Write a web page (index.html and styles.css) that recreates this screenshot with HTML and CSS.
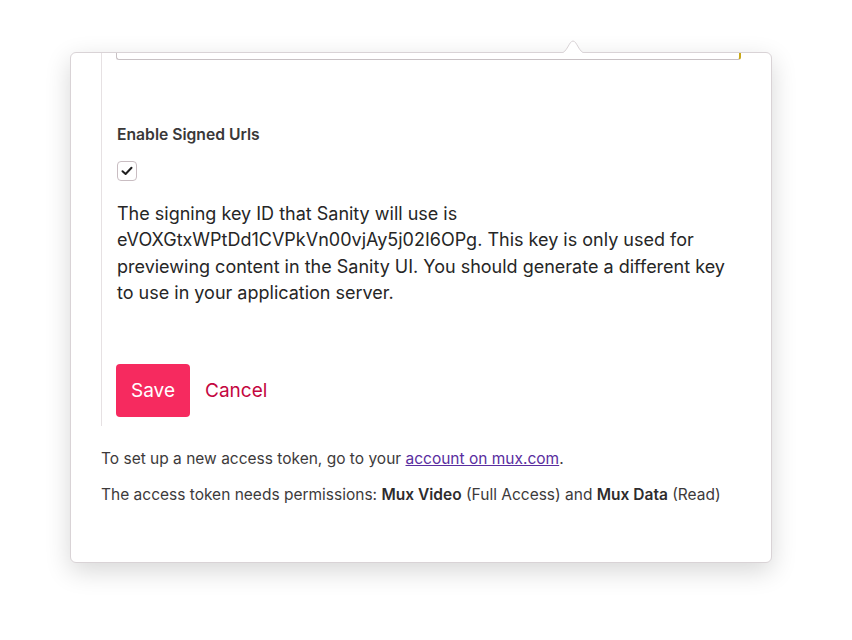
FILE: index.html
```html
<!DOCTYPE html>
<html lang="en">
<head>
  <meta charset="UTF-8">
  <meta name="viewport" content="width=device-width, initial-scale=1.0">
  <title>Mux settings</title>
  <link rel="stylesheet" href="styles.css">
</head>
<body>
  <div class="popover">
    <!-- petite flèche du popover -->
    <svg class="arrow" width="24" height="14" viewBox="0 0 24 14">
      <path d="M0 13 C6 13 8 1 12 1 C16 1 18 13 24 13" fill="#fff" stroke="#d9d3d6" stroke-width="1"/>
      <rect x="0" y="13" width="24" height="2" fill="#fff"/>
    </svg>

    <div class="fieldset">
      <div class="input-stub"></div>

      <div class="field">
        <label class="field-label">Enable Signed Urls</label>
        <span class="checkbox">
          <svg width="12" height="10" viewBox="0 0 12 10">
            <path d="M1.5 5.2 L4.6 8 L10.5 1.8" fill="none" stroke="#1f1f1f" stroke-width="2" stroke-linecap="round" stroke-linejoin="round"/>
          </svg>
        </span>
      </div>

      <p class="description">The signing key ID that Sanity will use is eVOXGtxWPtDd1CVPkVn00vjAy5j02I6OPg. This key is only used for previewing content in the Sanity UI. You should generate a different key to use in your application server.</p>

      <div class="actions">
        <button class="btn-save" type="button">Save</button>
        <button class="btn-cancel" type="button">Cancel</button>
      </div>
    </div>

    <p class="hint">To set up a new access token, go to your <a href="#">account on mux.com</a>.</p>
    <p class="hint">The access token needs permissions: <strong>Mux Video</strong> (Full Access) and <strong>Mux Data</strong> (Read)</p>
  </div>
</body>
</html>
```

FILE: styles.css
```css
body {
  margin: 0;
  padding: 52px 0 0 70px;
  min-height: 640px;
  box-sizing: border-box;
  background-color: #fff;
  font-family: Inter, "Noto Sans", sans-serif;
  color: #262626;
}

.popover {
  position: relative;
  box-sizing: border-box;
  width: 702px;
  height: 511px;
  background-color: #fff;
  border: 1px solid #d9d3d6;
  border-radius: 6px;
  box-shadow: 0 8px 26px rgba(0, 0, 0, 0.16);
}

.arrow {
  position: absolute;
  top: -13px;
  left: 490px;
}

.fieldset {
  margin: 0 30px 0 30px;
  border-left: 1px solid #e6e1e3;
  padding: 0 0 9px 14px;
}

.input-stub {
  box-sizing: border-box;
  height: 7px;
  border: 1px solid #c8c1c4;
  border-top: none;
  border-right: 2px solid #c9a81a;
  border-radius: 0 0 3px 3px;
}

.field {
  padding-top: 65px;
}

.field-label {
  display: block;
  font-size: 15.7px;
  font-weight: 600;
  line-height: 20px;
  color: #3a3838;
  padding-left: 1px;
}

.checkbox {
  box-sizing: border-box;
  display: flex;
  align-items: center;
  justify-content: center;
  width: 20px;
  height: 20px;
  margin: 16px 0 0 1px;
  border: 1px solid #c9bdc2;
  border-radius: 4px;
}

.description {
  margin: 20px 0 0 1px;
  font-size: 18px;
  line-height: 26.3px;
  color: #262626;
}

.actions {
  display: flex;
  align-items: center;
  margin-top: 58px;
}

.btn-save {
  width: 74px;
  height: 53px;
  border: none;
  border-radius: 4px;
  background-color: #f62a5f;
  color: #fff;
  font-family: inherit;
  font-size: 19px;
  cursor: pointer;
}

.btn-cancel {
  margin-left: 15px;
  padding: 0;
  border: none;
  background: none;
  color: #c4063f;
  font-family: inherit;
  font-size: 19px;
  cursor: pointer;
}

.hint {
  margin: 0 0 0 30px;
  font-size: 15.5px;
  line-height: 20px;
  color: #3d3a3b;
}

.hint:first-of-type {
  margin-top: 23px;
}

.hint + .hint {
  margin-top: 16px;
}

.hint a {
  color: #5a2ea0;
}

.hint strong {
  font-weight: 600;
  color: #2e2c2d;
}
```
